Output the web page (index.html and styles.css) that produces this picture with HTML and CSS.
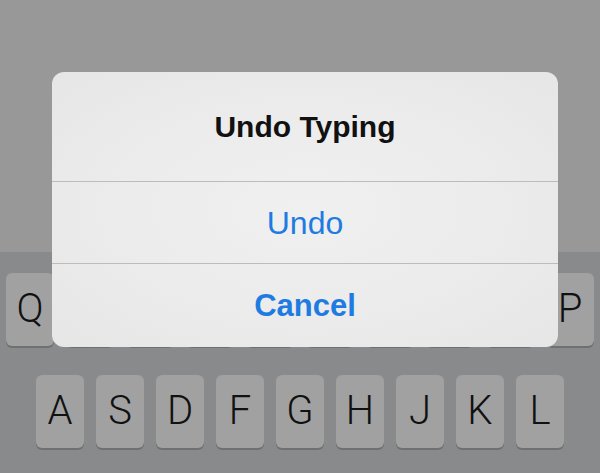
FILE: index.html
```html
<!DOCTYPE html>
<html lang="en">
<head>
    <meta charset="UTF-8">
    <meta name="viewport" content="width=device-width, initial-scale=1.0">
    <title>Undo Typing</title>
    <link rel="stylesheet" href="styles.css">
</head>
<body>
    <div class="screen">
        <div class="page-area"></div>

        <div class="keyboard">
            <div class="key-row row-top">
                <div class="key">Q</div>
                <div class="key">W</div>
                <div class="key">E</div>
                <div class="key">R</div>
                <div class="key">T</div>
                <div class="key">Y</div>
                <div class="key">U</div>
                <div class="key">I</div>
                <div class="key">O</div>
                <div class="key">P</div>
            </div>
            <div class="key-row row-middle">
                <div class="key">A</div>
                <div class="key">S</div>
                <div class="key">D</div>
                <div class="key">F</div>
                <div class="key">G</div>
                <div class="key">H</div>
                <div class="key">J</div>
                <div class="key">K</div>
                <div class="key">L</div>
            </div>
        </div>

        <!-- alert over the keyboard -->
        <div class="alert">
            <div class="alert-title">Undo Typing</div>
            <div class="alert-button">Undo</div>
            <div class="alert-button cancel">Cancel</div>
        </div>
    </div>
</body>
</html>
```

FILE: styles.css
```css
body {
    margin: 0;
    padding: 0;
    font-family: 'Liberation Sans', Arial, sans-serif;
    background-color: #8a8a8a;
    overflow: hidden;
}

.screen {
    position: relative;
    width: 600px;
    height: 473px;
    display: flex;
    flex-direction: column;
}

.page-area {
    height: 252px;
    flex-shrink: 0;
    background-color: #989898;
}

.keyboard {
    flex: 1;
    background-color: #898a8b;
    padding-top: 21px;
    display: flex;
    flex-direction: column;
    gap: 29px;
}

.key-row {
    display: flex;
    gap: 12px;
}

.row-top {
    padding-left: 6px;
}

.row-middle {
    padding-left: 36px;
}

.key {
    width: 48px;
    height: 73px;
    flex-shrink: 0;
    box-sizing: border-box;
    border-radius: 6px;
    background-color: #a1a1a1;
    box-shadow: 0 2px 0 #6f7070;
    display: flex;
    align-items: center;
    justify-content: center;
    font-family: 'Roboto', 'Liberation Sans', sans-serif;
    font-weight: 300;
    font-size: 40px;
    color: #111;
    padding-bottom: 2px;
}

.alert {
    position: absolute;
    left: 52px;
    top: 72px;
    width: 506px;
    border-radius: 12px;
    overflow: hidden;
    background: radial-gradient(ellipse at center, #f0f0f0 0%, #ebebeb 60%, #e6e6e6 100%);
    text-align: center;
}

.alert-title {
    height: 109px;
    line-height: 109px;
    font-size: 30px;
    font-weight: bold;
    color: #111;
    border-bottom: 1px solid #bcbcbc;
}

.alert-button {
    height: 81px;
    line-height: 83px;
    font-size: 32px;
    color: #1e7be2;
    border-bottom: 1px solid #bcbcbc;
}

.alert-button.cancel {
    height: 83px;
    line-height: 83px;
    font-size: 31px;
    font-weight: bold;
    border-bottom: none;
}
```
